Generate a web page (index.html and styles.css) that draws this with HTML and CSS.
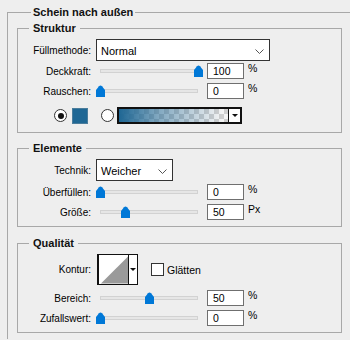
FILE: index.html
```html
<!DOCTYPE html>
<html lang="de">
<head>
<meta charset="utf-8">
<link rel="stylesheet" href="styles.css">
</head>
<body>
<fieldset class="outer">
  <legend class="outer-title">Schein nach außen</legend>

  <fieldset class="group group-struktur">
    <legend class="group-title">Struktur</legend>
    <div class="row row-first">
      <span class="lbl">Füllmethode:</span>
      <div class="select select-wide"><span>Normal</span><svg class="chev" width="9" height="5" viewBox="0 0 9 5"><polyline points="0.5,0.5 4.5,4.5 8.5,0.5" fill="none" stroke="#555" stroke-width="1"/></svg></div>
    </div>
    <div class="row row-s2">
      <span class="lbl">Deckkraft:</span>
      <div class="slider"><div class="track"></div><svg class="thumb" style="left:98px" width="9" height="12" viewBox="0 0 9 12"><path d="M0 5 L3 1.2 Q4.5 0 6 1.2 L9 5 V12 H0Z" fill="#0078d7"/></svg></div>
      <div class="num">100</div><span class="unit">%</span>
    </div>
    <div class="row row-s3">
      <span class="lbl">Rauschen:</span>
      <div class="slider"><div class="track"></div><svg class="thumb" style="left:0px" width="9" height="12" viewBox="0 0 9 12"><path d="M0 5 L3 1.2 Q4.5 0 6 1.2 L9 5 V12 H0Z" fill="#0078d7"/></svg></div>
      <div class="num">0</div><span class="unit">%</span>
    </div>
    <div class="color-row">
      <span class="radio radio-on"></span>
      <span class="swatch"></span>
      <span class="radio radio-second"></span>
      <div class="gradient"><div class="gradient-fill"></div><div class="drop"><span class="tri"></span></div></div>
    </div>
  </fieldset>

  <fieldset class="group group-elemente">
    <legend class="group-title">Elemente</legend>
    <div class="row row-first">
      <span class="lbl">Technik:</span>
      <div class="select select-narrow"><span>Weicher</span><svg class="chev" width="9" height="5" viewBox="0 0 9 5"><polyline points="0.5,0.5 4.5,4.5 8.5,0.5" fill="none" stroke="#555" stroke-width="1"/></svg></div>
    </div>
    <div class="row row-e2">
      <span class="lbl">Überfüllen:</span>
      <div class="slider"><div class="track"></div><svg class="thumb" style="left:0px" width="9" height="12" viewBox="0 0 9 12"><path d="M0 5 L3 1.2 Q4.5 0 6 1.2 L9 5 V12 H0Z" fill="#0078d7"/></svg></div>
      <div class="num">0</div><span class="unit">%</span>
    </div>
    <div class="row row-s3">
      <span class="lbl">Größe:</span>
      <div class="slider"><div class="track"></div><svg class="thumb" style="left:25px" width="9" height="12" viewBox="0 0 9 12"><path d="M0 5 L3 1.2 Q4.5 0 6 1.2 L9 5 V12 H0Z" fill="#0078d7"/></svg></div>
      <div class="num">50</div><span class="unit">Px</span>
    </div>
  </fieldset>

  <fieldset class="group group-qualitaet">
    <legend class="group-title">Qualität</legend>
    <div class="row row-first">
      <span class="lbl">Kontur:</span>
      <div class="contour">
        <svg class="contour-img" width="30" height="29" viewBox="0 0 30 29"><rect width="30" height="29" fill="#fff"/><polygon points="2,29 30,1 30,29" fill="#9a9a9a"/></svg>
        <div class="contour-drop"><span class="tri"></span></div>
      </div>
      <span class="check"></span><span class="check-lbl">Glätten</span>
    </div>
    <div class="row row-q2">
      <span class="lbl">Bereich:</span>
      <div class="slider"><div class="track"></div><svg class="thumb" style="left:49px" width="9" height="12" viewBox="0 0 9 12"><path d="M0 5 L3 1.2 Q4.5 0 6 1.2 L9 5 V12 H0Z" fill="#0078d7"/></svg></div>
      <div class="num">50</div><span class="unit">%</span>
    </div>
    <div class="row row-s3">
      <span class="lbl">Zufallswert:</span>
      <div class="slider"><div class="track"></div><svg class="thumb" style="left:0px" width="9" height="12" viewBox="0 0 9 12"><path d="M0 5 L3 1.2 Q4.5 0 6 1.2 L9 5 V12 H0Z" fill="#0078d7"/></svg></div>
      <div class="num">0</div><span class="unit">%</span>
    </div>
  </fieldset>
</fieldset>
</body>
</html>
```

FILE: styles.css
```css
html, body {
  margin: 0;
  padding: 0;
  width: 350px;
  height: 340px;
  overflow: hidden;
  background: #eeeeee;
}
body {
  font-family: "Liberation Sans", Arial, sans-serif;
  font-size: 10px;
  color: #000;
}
.outer {
  margin: 5px 0 0 7px;
  padding: 0 0 6px 9px;
  width: 343px;
  border: 1px solid #a8a8a8;
  border-right: none;
  border-bottom: none;
  box-sizing: border-box;
}
.outer-title, .group-title {
  font-weight: bold;
  font-size: 11px;
  line-height: 14px;
  height: 14px;
  color: #111;
}
.outer-title {
  margin-left: 14px;
  padding: 0 2px;
}
.group {
  margin: 0;
  width: 325px;
  box-sizing: border-box;
  border: 1px solid #a8a8a8;
  padding: 4px 0 8px 0;
  min-width: 0;
}
.group-title {
  margin-left: 11px;
  padding: 0 4px;
}
.group-struktur { margin-top: 2px; }
.group-elemente { margin-top: 8px; padding-bottom: 6px; }
.group-qualitaet { margin-top: 9px; padding-bottom: 6px; }

.row {
  display: flex;
  align-items: center;
  height: 16px;
}
.row-first { height: auto; }
.row-s2 { margin-top: 2px; }
.row-s3 { margin-top: 4px; }
.row-e2 { margin-top: 3px; }
.row-q2 { margin-top: 5px; }

.lbl {
  width: 74px;
  flex: none;
  text-align: right;
  padding-right: 1px;
  box-sizing: border-box;
  margin-right: 4px;
  white-space: nowrap;
}

.select {
  height: 22px;
  box-sizing: border-box;
  border: 1px solid #333;
  background: #fff;
  display: flex;
  align-items: center;
  justify-content: space-between;
  padding: 1px 5px 0 4px;
  font-size: 11px;
}
.select-wide { width: 174px; }
.select-narrow { width: 77px; }
.chev { display: block; margin-top: 1px; }

.slider {
  position: relative;
  width: 107px;
  height: 16px;
  flex: none;
}
.track {
  position: absolute;
  left: 4px;
  right: 5px;
  top: 6px;
  height: 4px;
  box-sizing: border-box;
  background: #e6e6e6;
  border: 1px solid #d2d2d2;
}
.thumb {
  position: absolute;
  top: 2px;
  display: block;
}
.num {
  margin-left: 4px;
  width: 37px;
  height: 16px;
  box-sizing: border-box;
  border: 1px solid #6f6f6f;
  background: #fff;
  padding-left: 5px;
  line-height: 15px;
  font-size: 10.5px;
  flex: none;
}
.unit {
  margin-left: 4px;
  align-self: flex-start;
  line-height: 12px;
  margin-top: -1px;
  font-size: 10.5px;
}

.color-row {
  display: flex;
  align-items: center;
  margin-top: 8px;
  padding-left: 36px;
  height: 17px;
}
.radio {
  width: 13px;
  height: 13px;
  box-sizing: border-box;
  border: 1px solid #333;
  border-radius: 50%;
  background: #fff;
  position: relative;
  flex: none;
}
.radio-on::after {
  content: "";
  position: absolute;
  left: 2.5px;
  top: 2.5px;
  width: 6px;
  height: 6px;
  border-radius: 50%;
  background: #111;
}
.swatch {
  margin-left: 5px;
  width: 16px;
  height: 16px;
  box-sizing: border-box;
  background: #1f6794;
  border: 1px solid #4b7d9c;
  flex: none;
}
.radio-second { margin-left: 13px; }
.gradient {
  margin-left: 3px;
  width: 125px;
  height: 17px;
  box-sizing: border-box;
  border: 2px solid #111;
  display: flex;
  flex: none;
}
.gradient-fill {
  flex: 1;
  background:
    linear-gradient(to right, #1f6794 0%, rgba(31,103,148,0.55) 35%, rgba(31,103,148,0) 95%),
    conic-gradient(#cfcfcf 25%, #f4f4f4 0 50%, #cfcfcf 0 75%, #f4f4f4 0) 0 0 / 10px 10px;
}
.drop {
  width: 11px;
  border-left: 1px solid #111;
  background: #fff;
  display: flex;
  align-items: center;
  justify-content: center;
}
.tri {
  width: 0;
  height: 0;
  border-left: 3px solid transparent;
  border-right: 3px solid transparent;
  border-top: 3px solid #111;
}

.contour {
  margin-left: 1px;
  width: 41px;
  height: 31px;
  box-sizing: border-box;
  border: 1px solid #111;
  border-left-width: 2px;
  display: flex;
  background: #fff;
}
.contour-img { display: block; width: 29px; height: 29px; }
.contour-drop {
  flex: 1;
  border-left: 1px solid #111;
  display: flex;
  align-items: center;
  justify-content: center;
}
.check {
  margin-left: 13px;
  width: 13px;
  height: 13px;
  box-sizing: border-box;
  border: 1px solid #333;
  background: #fff;
  flex: none;
}
.check-lbl {
  margin-left: 3px;
  font-size: 10.5px;
}
```
